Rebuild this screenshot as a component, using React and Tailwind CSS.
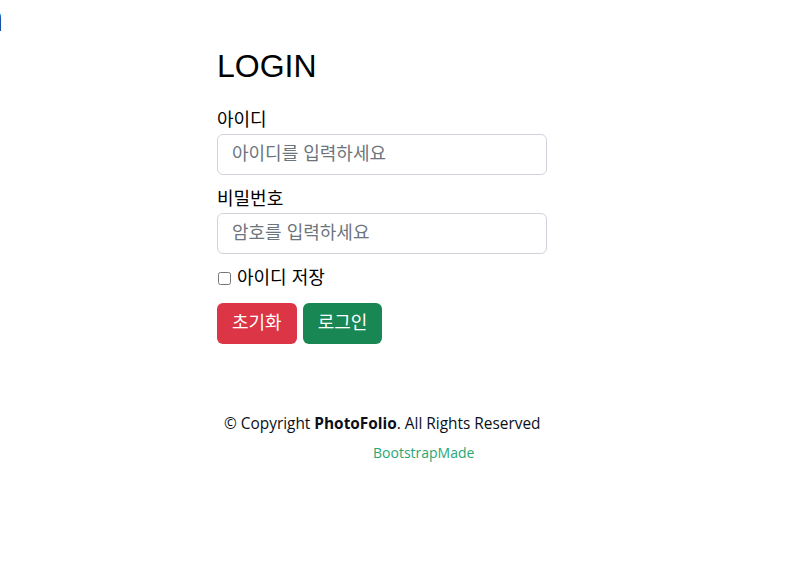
import React, { useState } from "react";

const sans = { fontFamily: '"Liberation Sans", "Noto Sans CJK KR", sans-serif' };

export default function App() {
  const [id, setId] = useState("");
  const [pw, setPw] = useState("");
  const [remember, setRemember] = useState(false);

  const reset = () => {
    setId("");
    setPw("");
    setRemember(false);
  };

  return (
    <div className="relative min-h-[569px] w-full overflow-hidden bg-white text-black" style={sans}>
      {/* header text that runs past the left edge */}
      <span className="absolute left-[-17px] top-[0px] text-[36px] leading-[38px] text-[#0a0f1a]">n</span>

      <div className="ml-[217px] w-[330px] pt-[47px]">
        <h2 className="mb-[22px] text-[32px] leading-[38px] font-normal">LOGIN</h2>

        <label className="block text-[18px] leading-[27px]">아이디</label>
        <input
          value={id}
          onChange={(e) => setId(e.target.value)}
          placeholder="아이디를 입력하세요"
          className="block w-full rounded-[6px] border border-[#ced4da] px-[14px] py-[6px] text-[18px] leading-[27px] placeholder:text-[#6c757d] outline-none"
        />

        <label className="mt-[11px] block text-[18px] leading-[27px]">비밀번호</label>
        <input
          type="password"
          value={pw}
          onChange={(e) => setPw(e.target.value)}
          placeholder="암호를 입력하세요"
          className="block w-full rounded-[6px] border border-[#ced4da] px-[14px] py-[6px] text-[18px] leading-[27px] placeholder:text-[#6c757d] outline-none"
        />

        <div className="mt-[11px] flex items-center gap-[6px] text-[18px] leading-[27px]">
          <input
            type="checkbox"
            checked={remember}
            onChange={(e) => setRemember(e.target.checked)}
            className="ml-[1px] h-[13px] w-[13px]"
          />
          <span>아이디 저장</span>
        </div>

        <div className="mt-[11px] flex gap-[6px]">
          <button
            onClick={reset}
            className="rounded-[6px] bg-[#dc3545] px-[15px] py-[7px] text-[18px] leading-[27px] text-white"
          >
            초기화
          </button>
          <button className="rounded-[6px] bg-[#198754] px-[15px] py-[7px] text-[18px] leading-[27px] text-white">
            로그인
          </button>
        </div>
      </div>

      <footer className="mt-[68px] flex flex-col" style={{ fontFamily: '"Open Sans", sans-serif' }}>
        <div className="pl-[224px] text-[15.4px] leading-[24px] text-[#0a0f1a]">
          © Copyright <strong className="font-bold">PhotoFolio</strong>. All Rights Reserved
        </div>
        <div className="mt-[7px] pl-[373px] text-[14px] leading-[20px]">
          <a href="#" className="text-[#27a776]">BootstrapMade</a>
        </div>
      </footer>
    </div>
  );
}
